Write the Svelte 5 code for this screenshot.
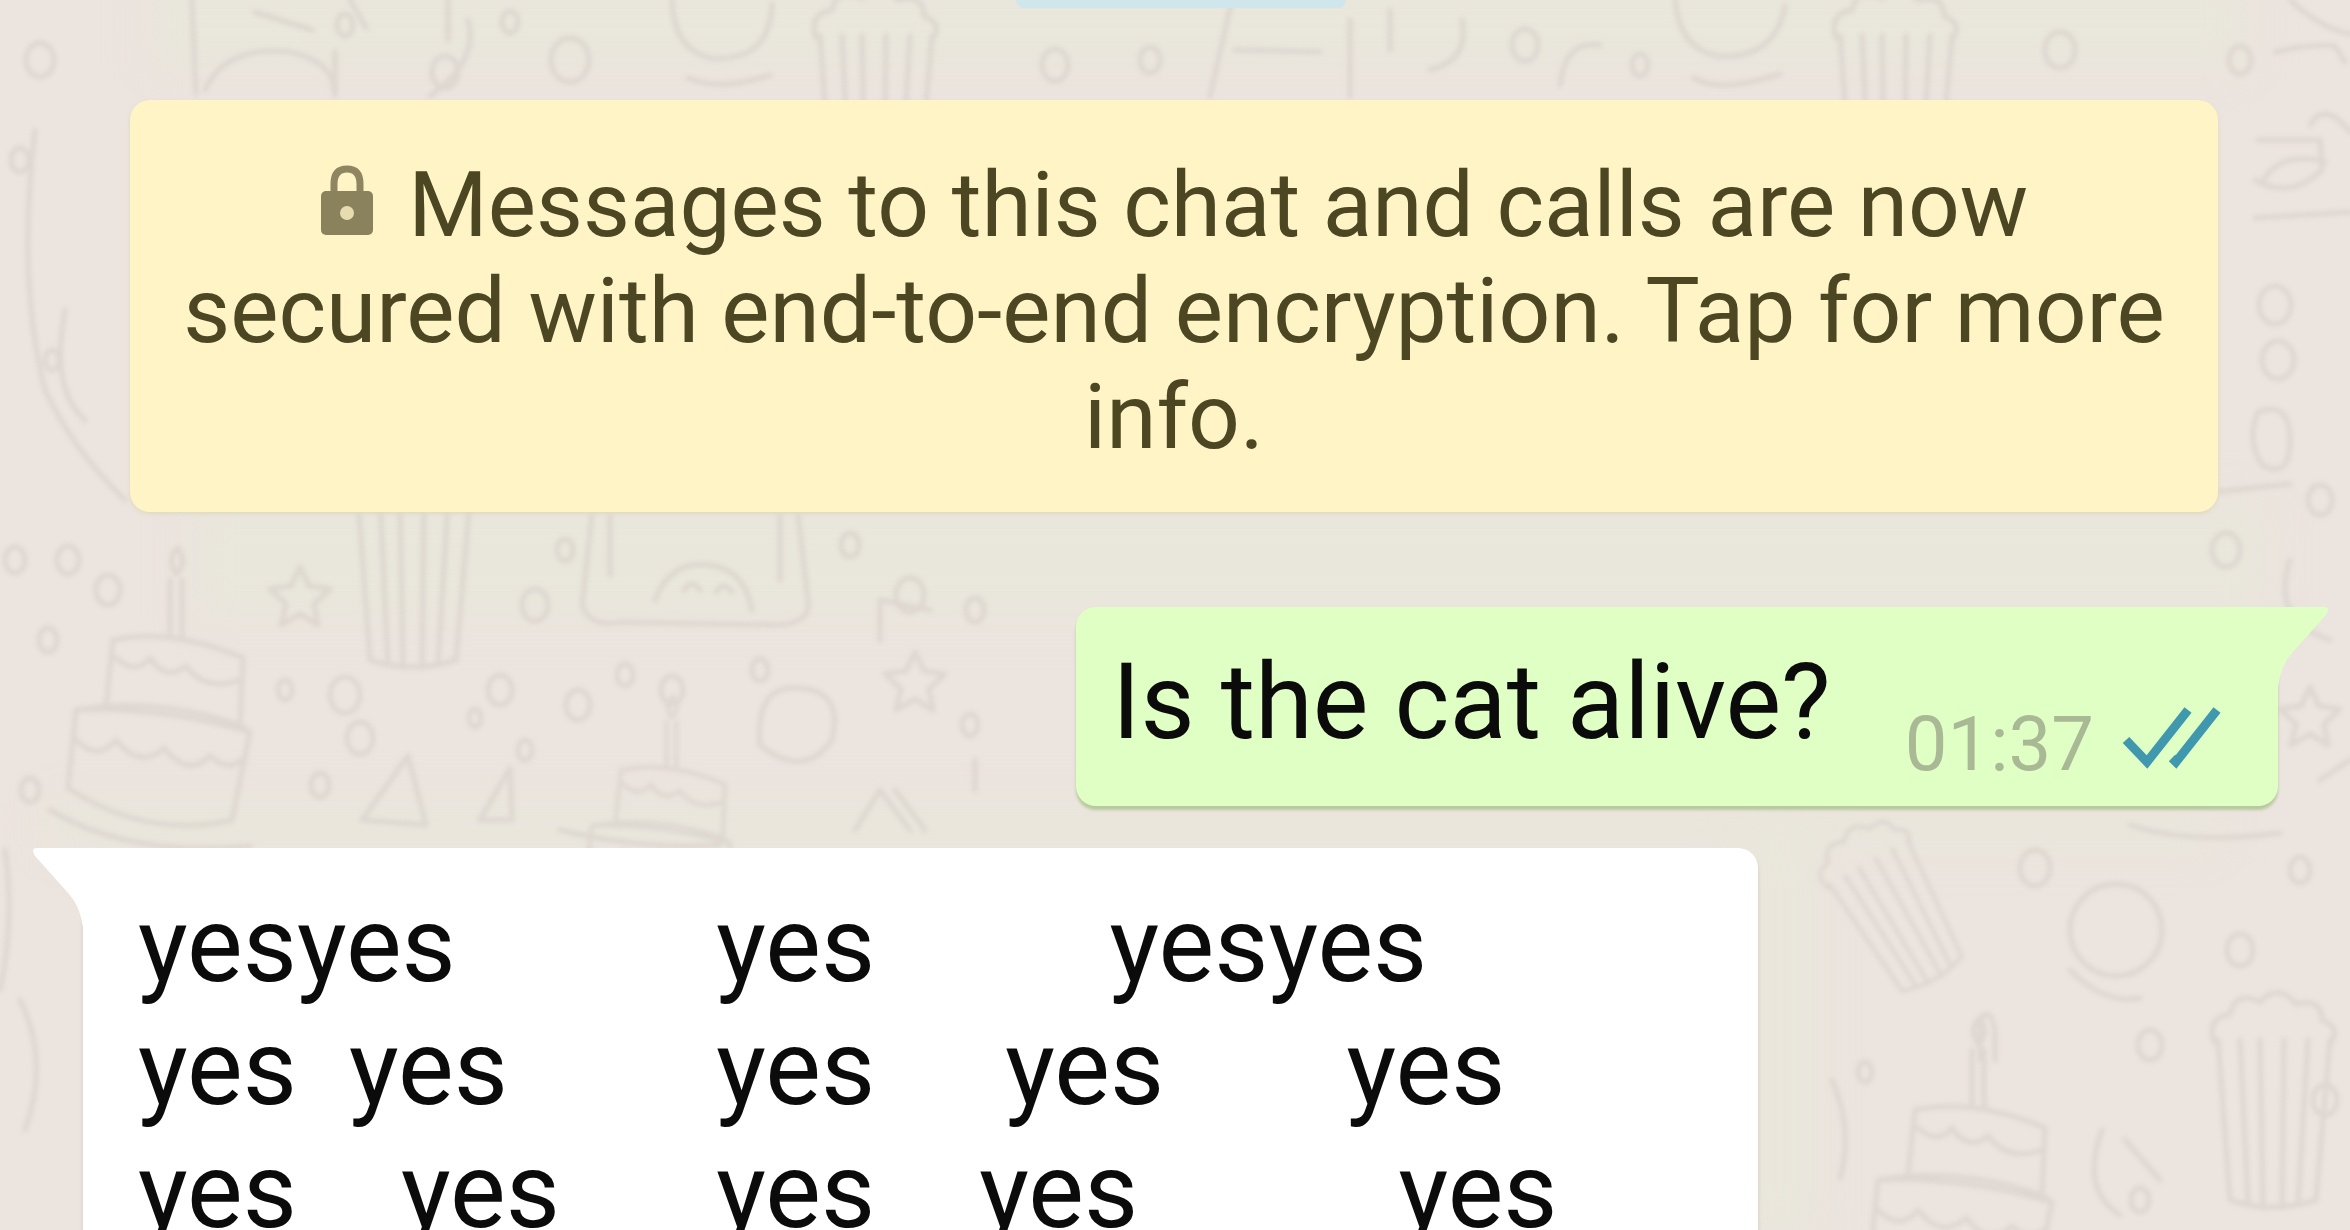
<script lang="ts">
  const reply = [
    "yesyes          yes         yesyes",
    "yes  yes        yes     yes       yes",
    "yes    yes      yes    yes          yes"
  ].join("\n");

  // small bubbles scattered between the doodles: x, y, radius
  const bits = [
    [20, 160, 9], [52, 360, 7], [15, 560, 10], [68, 560, 11], [108, 590, 12], [48, 640, 9],
    [535, 605, 13], [285, 690, 7], [345, 695, 15], [360, 738, 13], [500, 690, 12], [475, 718, 6],
    [578, 705, 12], [625, 675, 8], [672, 690, 11], [525, 750, 7], [760, 670, 8], [320, 785, 9],
    [970, 725, 8], [850, 545, 9], [910, 595, 14], [975, 610, 9], [565, 550, 8], [2275, 305, 16],
    [2278, 360, 16], [2320, 500, 12], [2226, 550, 14], [2035, 868, 15], [1865, 1072, 7],
    [2150, 1045, 12], [2240, 950, 13], [2325, 1100, 12], [2140, 1200, 9], [570, 60, 19],
    [345, 25, 8], [1055, 65, 13], [1525, 45, 13], [2060, 50, 15], [510, 22, 8], [1150, 60, 10],
    [1640, 65, 8], [2240, 60, 11], [30, 790, 9], [2300, 870, 10], [40, 60, 14], [445, 72, 13]
  ];
</script>

<svelte:head>
  <title>Chat</title>
</svelte:head>

<main class="chat">
  <svg class="wallpaper" viewBox="0 0 2350 1230" preserveAspectRatio="xMidYMid slice" aria-hidden="true">
    <defs>
      <g id="cup">
        <path d="M0 0 L12 160 Q55 174 98 160 L112 0 M22 0 L30 164 M42 0 L45 168 M66 0 L64 168 M90 0 L80 165" />
        <path d="M-4 2 Q-12 -22 12 -26 Q18 -50 42 -38 Q60 -58 78 -36 Q104 -42 104 -20 Q124 -12 112 4" />
      </g>
      <g id="cake">
        <path d="M45 0 Q105 -12 175 18 L172 85 M45 0 L38 66 Q105 62 172 85 M38 66 L8 70 L0 148 Q80 200 164 180 L182 92 L172 85 M8 70 Q90 66 182 92" />
        <path d="M48 18 Q68 36 82 18 Q98 42 118 26 Q138 52 172 40 M8 100 Q30 122 48 100 Q72 130 96 108 Q120 138 142 116 Q160 132 174 120 M102 -5 V-60 M114 -3 V-60 M108 -66 Q98 -82 110 -92 Q120 -76 108 -66" />
      </g>
      <path id="star" d="M0 -28 L9 -9 L30 -6 L14 9 L18 30 L0 19 L-19 30 L-14 9 L-30 -6 L-9 -9 Z" />
    </defs>
    <g class="tint">
      <rect x="150" y="-20" width="2100" height="90" />
      <rect x="190" y="500" width="2080" height="120" />
      <rect x="40" y="800" width="2180" height="50" />
      <rect x="1740" y="840" width="80" height="400" />
    </g>
    <g class="doodles">
      <use href="#cup" x="358" y="500" />
      <use href="#cup" x="2218" y="1040" />
      <use href="#cup" x="820" y="36" />
      <use href="#cup" x="1840" y="36" />
      <use href="#cup" transform="translate(1830 885) rotate(-30) scale(.8)" />
      <use href="#cake" x="68" y="640" />
      <use href="#cake" x="1870" y="1110" />
      <use href="#cake" transform="translate(585 770) scale(.8)" />
      <use href="#star" x="300" y="595" />
      <use href="#star" x="915" y="680" />
      <use href="#star" x="2310" y="715" />
      <path d="M592 514 L582 605 Q590 628 620 622 L780 625 Q812 622 808 600 L798 514 M610 514 V575 M780 514 V580" />
      <path d="M655 600 Q670 560 710 565 Q745 570 752 610 M684 590 q8 -12 16 0 M716 592 q8 -12 16 0" />
      <path d="M760 745 Q755 685 798 688 Q844 690 832 740 Q804 780 760 745" />
      <path d="M362 820 L408 756 L426 825 Z M480 820 L510 768 L512 820 Z" />
      <path d="M35 130 q-18 150 10 260 q28 60 80 110 M85 420 q-35 -30 -20 -110" />
      <path d="M205 90 Q225 45 290 52 Q335 62 334 92 M192 0 L196 94 M335 95 V52 M255 12 L312 30 M350 0 L366 28" />
      <path d="M672 0 Q674 52 712 58 Q770 62 772 4 M688 78 Q720 92 770 75" />
      <path d="M1675 0 Q1680 50 1718 56 Q1775 60 1785 6 M1694 78 Q1720 94 1780 74" />
      <path d="M1235 50 L1320 52 M1232 0 L1210 96 M1350 20 V96 M1430 70 Q1470 60 1462 20 M1390 10 V50" />
      <path d="M448 0 V40 M468 20 Q480 60 430 96 M1560 85 Q1565 40 1600 45" />
      <path d="M2275 52 Q2310 44 2335 46 L2345 62 M2290 0 Q2320 28 2350 34 M2310 125 Q2325 100 2350 132" />
      <path d="M2258 140 H2320 L2322 170 Q2290 200 2255 180 M2262 182 Q2280 150 2325 162 M2255 218 L2350 212" />
      <path d="M2258 412 Q2290 400 2290 440 Q2290 480 2262 465 Q2246 440 2258 412 M2215 492 L2290 484" />
      <circle cx="2116" cy="930" r="46" />
      <path d="M2070 970 Q2105 1005 2140 998 M2102 1130 Q2080 1190 2120 1215 M2125 1140 L2160 1180" />
      <path d="M1832 1080 Q1854 1130 1840 1178 M1980 1060 V1020 Q1990 1005 1995 1030 V1060" />
      <path d="M2290 560 Q2270 620 2330 640 M2320 780 L2350 760 M2130 825 q60 20 150 8" />
      <path d="M50 810 Q130 858 250 846 M560 830 Q640 850 720 845 M5 850 Q15 920 0 990 M20 1000 q30 60 5 130" />
      <path d="M855 830 L880 790 L910 830 M895 790 L925 830 M975 760 V790 M880 640 V600 L930 610" />
      {#each bits as [x, y, r]}
        <ellipse cx={x} cy={y} rx={r} ry={r + 3} />
      {/each}
    </g>
  </svg>

  <div class="day"></div>

  <p class="notice">
    <svg class="lock" viewBox="0 0 54 72" aria-hidden="true">
      <path d="M14 32 V20 Q14 5 27 5 Q40 5 40 20 V32" fill="none" stroke="#8f8661" stroke-width="7" />
      <rect x="1" y="27" width="52" height="44" rx="5" fill="#8a815d" />
      <circle cx="27" cy="49" r="7" fill="#e6dcaf" />
    </svg>
    Messages to this chat and calls are now secured with end-to-end encryption. Tap for more info.
  </p>

  <div class="message sent">
    <p class="text">Is the cat alive?</p>
    <span class="meta">
      <time>01:37</time>
      <svg class="ticks" viewBox="0 0 100 66" role="img" aria-label="Read">
        <path d="M4 36 L25 58 L66 6 M50 54 L54 58 L95 6" />
      </svg>
    </span>
    <svg class="tail" viewBox="0 0 52 80" aria-hidden="true">
      <path d="M0 0 H46 Q53 0 48 8 L14 46 Q3 58 0 80 Z" fill="#e0ffc4" />
    </svg>
  </div>

  <div class="message received">
    <svg class="tail" viewBox="0 0 52 80" aria-hidden="true">
      <path d="M52 0 H6 Q-1 0 4 8 L38 46 Q49 58 52 80 Z" fill="#fff" />
    </svg>
    <p class="text">{reply}</p>
  </div>
</main>

<style>
  :global(body) {
    margin: 0;
    background: #ece4df;
  }

  .chat {
    position: relative;
    display: flex;
    flex-direction: column;
    box-sizing: border-box;
    height: 100vh;
    overflow: hidden;
    padding: 0 72px 0 83px;
    font-family: Roboto, "Liberation Sans", sans-serif;
    background: #ece4df;
  }

  .wallpaper {
    position: absolute;
    inset: 0;
    width: 100%;
    height: 100%;
  }

  .tint {
    fill: #e9e6db;
    filter: blur(20px);
  }

  .doodles {
    fill: none;
    stroke: #d5cec8;
    stroke-width: 5;
    stroke-linecap: round;
    stroke-linejoin: round;
    opacity: 0.6;
    filter: blur(2px);
  }

  .day {
    position: relative;
    flex-shrink: 0;
    align-self: center;
    width: 330px;
    height: 8px;
    border-radius: 0 0 8px 8px;
    background: #cfe6ec;
  }

  p {
    margin: 0;
  }

  .notice {
    position: relative;
    margin: 92px 60px 0 47px;
    padding: 52px 42px 42px;
    border-radius: 20px;
    background: #fef4c5;
    box-shadow: 0 2px 4px #e0dac0;
    color: #4c4622;
    font-size: 91px;
    line-height: 106px;
    text-align: center;
  }

  .lock {
    width: 54px;
    height: 72px;
    margin-right: 12px;
  }

  .message {
    position: relative;
    display: flex;
    flex-shrink: 0;
    border-radius: 20px;
    color: #0b0b0b;
    font-size: 105px;
    line-height: 123px;
  }

  .sent {
    align-self: flex-end;
    align-items: flex-end;
    gap: 74px;
    margin-top: 95px;
    padding: 34px 56px 22px 36px;
    border-top-right-radius: 0;
    background: #e0ffc4;
    box-shadow: 0 4px 3px #b9c99f;
  }

  .sent .text {
    padding-bottom: 20px;
  }

  .received {
    align-self: flex-start;
    margin-top: 42px;
    padding: 36px 200px 60px 55px;
    border-top-left-radius: 0;
    background: #fff;
    box-shadow: 0 4px 4px #cfcbc4;
  }

  .received .text {
    white-space: pre;
  }

  .meta {
    display: flex;
    align-items: flex-start;
    gap: 28px;
    color: #a9b996;
    font-size: 76px;
    line-height: 80px;
  }

  .ticks {
    width: 100px;
    height: 66px;
    fill: none;
    stroke: #3f98ae;
    stroke-width: 9;
  }

  .tail {
    position: absolute;
    top: 0;
    width: 52px;
    height: 80px;
  }

  .sent .tail {
    left: 100%;
  }

  .received .tail {
    right: 100%;
  }
</style>
